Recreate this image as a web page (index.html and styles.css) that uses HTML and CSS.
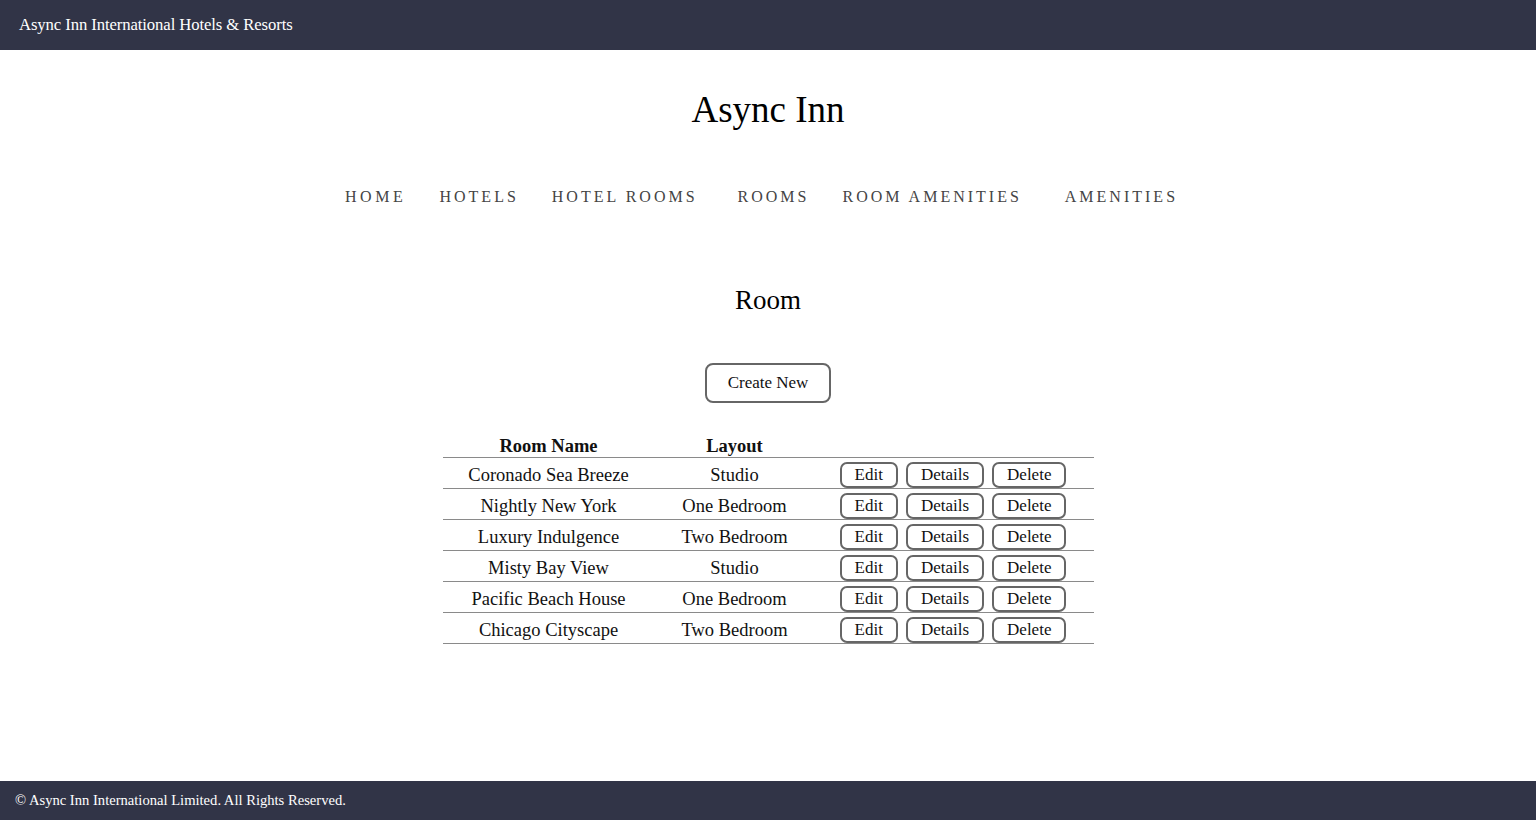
FILE: index.html
```html
<!DOCTYPE html>
<html lang="en">
<head>
<meta charset="utf-8">
<title>Room - Async Inn</title>
<link rel="stylesheet" href="styles.css">
</head>
<body>
<header class="topbar">
  <span class="brand">Async Inn International Hotels &amp; Resorts</span>
</header>
<main class="main">
  <h1 class="site-title">Async Inn</h1>
  <nav class="nav">
    <a class="nav-link" href="#">Home</a>
    <a class="nav-link" href="#">Hotels</a>
    <a class="nav-link" href="#">Hotel Rooms</a>
    <a class="nav-link nav-gap-wide" href="#">Rooms</a>
    <a class="nav-link" href="#">Room Amenities</a>
    <a class="nav-link nav-gap-wider" href="#">Amenities</a>
  </nav>
  <h2 class="page-title">Room</h2>
  <div class="create-wrap">
    <a class="btn btn-create" href="#">Create New</a>
  </div>
  <table class="rooms">
    <colgroup>
      <col class="col-name">
      <col class="col-layout">
      <col class="col-actions">
    </colgroup>
    <thead>
      <tr><th>Room Name</th><th>Layout</th><th></th></tr>
    </thead>
    <tbody>
      <tr><td>Coronado Sea Breeze</td><td>Studio</td><td><div class="actions"><a class="btn" href="#">Edit</a><a class="btn" href="#">Details</a><a class="btn" href="#">Delete</a></div></td></tr>
      <tr><td>Nightly New York</td><td>One Bedroom</td><td><div class="actions"><a class="btn" href="#">Edit</a><a class="btn" href="#">Details</a><a class="btn" href="#">Delete</a></div></td></tr>
      <tr><td>Luxury Indulgence</td><td>Two Bedroom</td><td><div class="actions"><a class="btn" href="#">Edit</a><a class="btn" href="#">Details</a><a class="btn" href="#">Delete</a></div></td></tr>
      <tr><td>Misty Bay View</td><td>Studio</td><td><div class="actions"><a class="btn" href="#">Edit</a><a class="btn" href="#">Details</a><a class="btn" href="#">Delete</a></div></td></tr>
      <tr><td>Pacific Beach House</td><td>One Bedroom</td><td><div class="actions"><a class="btn" href="#">Edit</a><a class="btn" href="#">Details</a><a class="btn" href="#">Delete</a></div></td></tr>
      <tr><td>Chicago Cityscape</td><td>Two Bedroom</td><td><div class="actions"><a class="btn" href="#">Edit</a><a class="btn" href="#">Details</a><a class="btn" href="#">Delete</a></div></td></tr>
    </tbody>
  </table>
</main>
<footer class="footer">
  <span>&copy; Async Inn International Limited. All Rights Reserved.</span>
</footer>
</body>
</html>
```

FILE: styles.css
```css
* { box-sizing: border-box; }

html, body { height: 100%; }

body {
  margin: 0;
  min-height: 100vh;
  display: flex;
  flex-direction: column;
  font-family: "Liberation Serif", "Times New Roman", serif;
  color: #111;
  background: #fff;
}

.topbar {
  height: 50px;
  background: #313447;
  color: #fff;
  display: flex;
  align-items: center;
  padding-left: 19px;
}

.brand {
  font-size: 16.7px;
  letter-spacing: -0.1px;
}

.main {
  flex: 1;
  display: flex;
  flex-direction: column;
  align-items: center;
}

.site-title {
  margin: 38px 0 0;
  font-size: 37px;
  line-height: 44px;
  font-weight: normal;
  color: #000;
}

.nav {
  margin-top: 55px;
  margin-left: -13px;
  display: flex;
  justify-content: center;
  gap: 33px;
}

.nav-link {
  font-size: 16px;
  line-height: 20px;
  letter-spacing: 3px;
  text-transform: uppercase;
  text-decoration: none;
  color: #444;
}

.nav-link:first-child { letter-spacing: 3.6px; }

.nav-gap-wide { margin-left: 7px; }
.nav-gap-wider { margin-left: 10px; }

.page-title {
  margin: 76px 0 0;
  font-size: 27px;
  line-height: 34px;
  font-weight: normal;
  color: #000;
}

.create-wrap {
  margin-top: 46px;
}

.btn {
  display: inline-flex;
  align-items: center;
  justify-content: center;
  height: 26px;
  padding: 0 13px;
  border: 2px solid #666;
  border-radius: 7px;
  font-size: 17px;
  color: #111;
  text-decoration: none;
  background: #fff;
}

.btn-create {
  height: 40px;
  padding: 0 21px;
  border-radius: 8px;
}

.rooms {
  margin-top: 29px;
  width: 651px;
  border-collapse: collapse;
  table-layout: fixed;
  font-size: 18.5px;
}

.col-name { width: 212px; }
.col-layout { width: 160px; }
.col-actions { width: 279px; }

.rooms th {
  font-weight: bold;
  text-align: center;
  height: 25px;
  padding: 3px 0 0;
  line-height: 22px;
  border-bottom: 1px solid #8a8a8a;
}

.rooms td {
  text-align: center;
  height: 31px;
  padding: 4px 0 0;
  line-height: 22px;
  border-bottom: 1px solid #8a8a8a;
}

.actions {
  display: flex;
  justify-content: center;
  gap: 8px;
  margin-left: -2px;
}

.footer {
  height: 39px;
  background: #313447;
  color: #fff;
  display: flex;
  align-items: center;
  padding-left: 15px;
  font-size: 14.6px;
}
```
